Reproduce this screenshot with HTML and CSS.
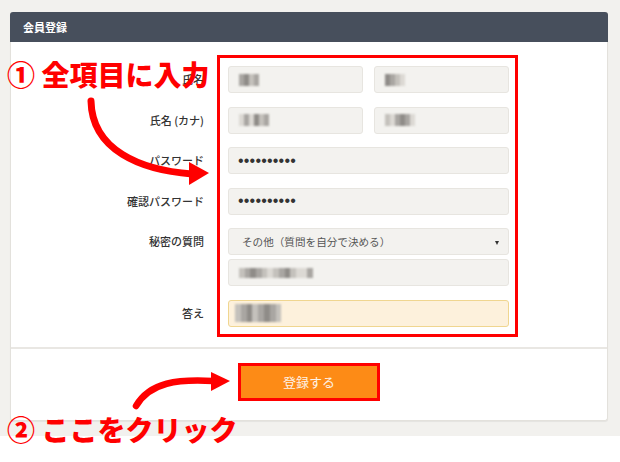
FILE: index.html
```html
<!DOCTYPE html>
<html lang="ja">
<head>
<meta charset="utf-8">
<title>会員登録</title>
<link rel="stylesheet" href="styles.css">
</head>
<body>
<div class="stage">
  <section class="panel">
    <header class="panel-head">会員登録</header>
    <div class="panel-body">
      <form class="form">
        <label class="lbl">氏名</label>
        <div class="field two">
          <div class="input"><span class="mosaic"><i class="g2"></i><i class="g1"></i><i class="g3"></i><i class="g2"></i></span></div>
          <div class="input"><span class="mosaic"><i class="g1"></i><i class="g2"></i><i class="g3"></i><i class="g4"></i></span></div>
        </div>

        <label class="lbl">氏名 (カナ)</label>
        <div class="field two">
          <div class="input"><span class="mosaic"><i class="g4"></i><i class="g2"></i><i class="g4"></i><i class="g1"></i><i class="g3"></i><i class="g2"></i></span></div>
          <div class="input"><span class="mosaic"><i class="g3"></i><i class="g4"></i><i class="g2"></i><i class="g1"></i><i class="g2"></i><i class="g4"></i></span></div>
        </div>

        <label class="lbl">パスワード</label>
        <div class="field"><div class="input dots">••••••••••</div></div>

        <label class="lbl">確認パスワード</label>
        <div class="field"><div class="input dots">••••••••••</div></div>

        <label class="lbl">秘密の質問</label>
        <div class="field stack">
          <div class="input select">その他（質問を自分で決める）<span class="caret"></span></div>
          <div class="input"><span class="mosaic long"><i class="g3"></i><i class="g2"></i><i class="g1"></i><i class="g2"></i><i class="g3"></i><i class="g4"></i><i class="g3"></i><i class="g2"></i><i class="g1"></i><i class="g3"></i><i class="g4"></i><i class="g4"></i><i class="g2"></i></span></div>
        </div>

        <label class="lbl">答え</label>
        <div class="field"><div class="input answer"><span class="mosaic"><i class="g3"></i><i class="g2"></i><i class="g1"></i><i class="g3"></i><i class="g2"></i><i class="g1"></i><i class="g2"></i><i class="g3"></i></span></div></div>
      </form>
    </div>
    <footer class="panel-foot">
      <button class="btn" type="button">登録する</button>
    </footer>
  </section>

  <div class="redbox"></div>
  <div class="note note1">① 全項目に入力</div>
  <div class="note note2">② ここをクリック</div>
  <svg class="arrows" width="620" height="462" viewBox="0 0 620 462">
    <path d="M91 101 C92 150 140 170 192 174" fill="none" stroke="#ff0000" stroke-width="7" stroke-linecap="round"/>
    <polygon points="189,162 209,173 189,185" fill="#ff0000"/>
    <path d="M136 406 C150 382 178 379 213 381" fill="none" stroke="#ff0000" stroke-width="6.5" stroke-linecap="round"/>
    <polygon points="211,372 230,381 211,391" fill="#ff0000"/>
  </svg>
</div>
</body>
</html>
```

FILE: styles.css
```css
* { box-sizing: border-box; }

html, body {
  margin: 0;
  padding: 0;
  background: #ffffff;
}

body {
  font-family: "Noto Sans CJK JP", "Noto Sans", "Liberation Sans", sans-serif;
  color: #444;
}

.stage {
  position: relative;
  height: 462px;
  background: linear-gradient(to bottom, #f2f1ee 0, #f2f1ee 436px, #ffffff 436px);
  padding: 12px 12px 0 10px;
}

.panel {
  width: 598px;
  background: #fff;
  border: 1px solid #e3e1dc;
  border-top: none;
  border-radius: 3px;
  box-shadow: 0 1px 1px rgba(0, 0, 0, 0.06);
}

.panel-head {
  height: 30px;
  margin: 0 -1px;
  padding-left: 13px;
  background: #474f5c;
  color: #fff;
  font-size: 11px;
  font-weight: 700;
  line-height: 30px;
  border-radius: 3px 3px 0 0;
}

.panel-body {
  padding: 24px 0 20px 0;
}

.form {
  display: grid;
  grid-template-columns: 193px 281px;
  column-gap: 24px;
  row-gap: 13.5px;
  align-items: start;
}

.lbl {
  height: 27px;
  line-height: 27px;
  text-align: right;
  font-size: 11px;
  font-weight: 500;
  color: #333;
  white-space: nowrap;
}

.field.two {
  display: flex;
  gap: 11px;
}

.field.two .input {
  flex: 1;
}

.field.stack {
  display: flex;
  flex-direction: column;
  gap: 4px;
}

.input {
  position: relative;
  display: flex;
  align-items: center;
  height: 27px;
  padding: 0 10px;
  background: #f3f2ef;
  border: 1px solid #e7e5e0;
  border-radius: 3px;
  font-size: 11px;
  color: #555;
}

.input.dots {
  font-family: "Liberation Sans", sans-serif;
  font-size: 16px;
  color: #333;
  padding-left: 9px;
  letter-spacing: 0.2px;
}

.input.select {
  padding-left: 13px;
  font-size: 10.6px;
  color: #555;
}

.caret {
  position: absolute;
  right: 9px;
  top: 12px;
  width: 0;
  height: 0;
  border-left: 2.5px solid transparent;
  border-right: 2.5px solid transparent;
  border-top: 4px solid #333;
}

.input.answer {
  background: #fdf1dc;
  border-color: #f0d690;
  padding-left: 6px;
}

.mosaic {
  display: inline-flex;
  height: 12px;
  filter: blur(0.8px);
}

.mosaic i {
  display: block;
  width: 5px;
  height: 12px;
}

.mosaic.long {
  height: 10px;
}

.mosaic.long i {
  width: 5.7px;
  height: 10px;
}

.input.answer .mosaic,
.input.answer .mosaic i {
  height: 18px;
  width: auto;
}

.input.answer .mosaic i {
  width: 5.8px;
}

.g1 { background: #8f8c88; }
.g2 { background: #a9a6a2; }
.g3 { background: #c4c1bc; }
.g4 { background: #dcd9d4; }

.panel-foot {
  border-top: 2px solid #e9e7e3;
  padding: 14px 0 19px 0;
  display: flex;
  justify-content: center;
}

.btn {
  width: 142px;
  height: 38px;
  background: #fd8b16;
  border: 3px solid #ff0000;
  color: #fdf2e6;
  font-family: "Noto Sans CJK JP", sans-serif;
  font-size: 13px;
  padding: 0;
  cursor: pointer;
}

.redbox {
  position: absolute;
  left: 217px;
  top: 55px;
  width: 301px;
  height: 282px;
  border: 3px solid #ff0000;
  pointer-events: none;
}

.note {
  position: absolute;
  left: 7px;
  font-family: "Noto Sans CJK JP", sans-serif;
  font-weight: 900;
  font-size: 28px;
  line-height: 28px;
  color: #ff0000;
  white-space: nowrap;
}

.note1 { top: 60px; }
.note2 { top: 415px; }

.arrows {
  position: absolute;
  left: 0;
  top: 0;
  pointer-events: none;
}
```
